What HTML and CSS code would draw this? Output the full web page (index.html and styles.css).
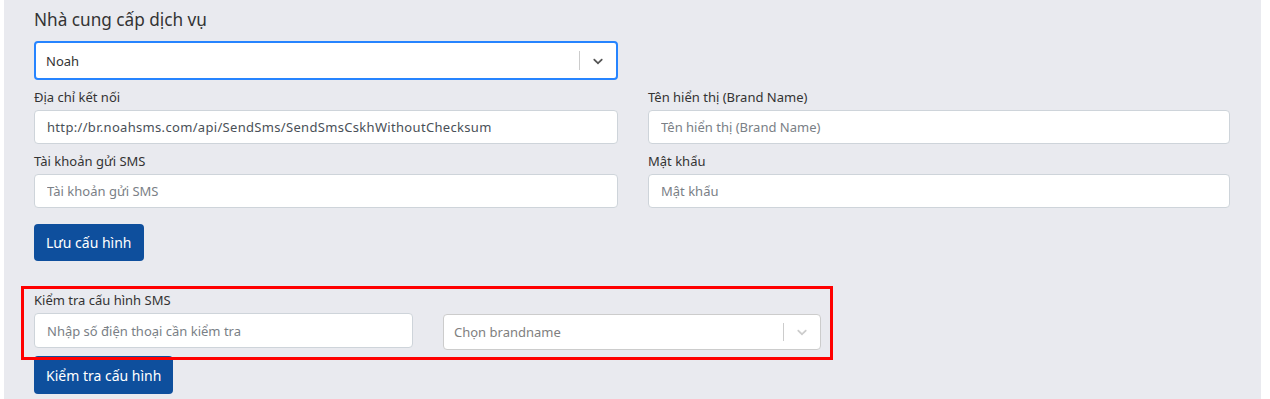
FILE: index.html
```html
<!DOCTYPE html>
<html lang="vi">

<head>
    <meta charset="UTF-8">
    <meta name="viewport" content="width=device-width, initial-scale=1.0">
    <title>Cấu hình SMS</title>
    <link rel="stylesheet" href="styles.css">
</head>

<body>
    <main class="page">
        <h2 class="page-title">Nhà cung cấp dịch vụ</h2>

        <div class="select select-focused provider">
            <span class="select-value">Noah</span>
            <span class="select-sep"></span>
            <span class="select-arrow">
                <svg width="16" height="16" viewBox="0 0 20 20"><path d="M4.516 7.548c0.436-0.446 1.043-0.481 1.576 0l3.908 3.747 3.908-3.747c0.533-0.481 1.141-0.446 1.574 0 0.436 0.445 0.408 1.197 0 1.615-0.406 0.418-4.695 4.502-4.695 4.502-0.217 0.223-0.502 0.335-0.787 0.335s-0.57-0.112-0.789-0.335c0 0-4.287-4.084-4.695-4.502s-0.436-1.17 0-1.615z" /></svg>
            </span>
        </div>

        <div class="form-grid">
            <div class="field">
                <label for="url">Địa chỉ kết nối</label>
                <input type="text" id="url" class="url-input" value="http://br.noahsms.com/api/SendSms/SendSmsCskhWithoutChecksum">
            </div>
            <div class="field">
                <label for="brand">Tên hiển thị (Brand Name)</label>
                <input type="text" id="brand" placeholder="Tên hiển thị (Brand Name)">
            </div>
            <div class="field">
                <label for="account">Tài khoản gửi SMS</label>
                <input type="text" id="account" placeholder="Tài khoản gửi SMS">
            </div>
            <div class="field">
                <label for="password">Mật khẩu</label>
                <input type="text" id="password" placeholder="Mật khẩu">
            </div>
        </div>

        <button class="btn btn-save">Lưu cấu hình</button>

        <section class="test-block">
            <label for="phone">Kiểm tra cấu hình SMS</label>
            <div class="test-row">
                <input type="text" id="phone" placeholder="Nhập số điện thoại cần kiểm tra">
                <div class="select brandname">
                    <span class="select-placeholder">Chọn brandname</span>
                    <span class="select-sep"></span>
                    <span class="select-arrow">
                        <svg width="16" height="16" viewBox="0 0 20 20"><path d="M4.516 7.548c0.436-0.446 1.043-0.481 1.576 0l3.908 3.747 3.908-3.747c0.533-0.481 1.141-0.446 1.574 0 0.436 0.445 0.408 1.197 0 1.615-0.406 0.418-4.695 4.502-4.695 4.502-0.217 0.223-0.502 0.335-0.787 0.335s-0.57-0.112-0.789-0.335c0 0-4.287-4.084-4.695-4.502s-0.436-1.17 0-1.615z" /></svg>
                    </span>
                </div>
            </div>
            <button class="btn btn-test">Kiểm tra cấu hình</button>
        </section>

        <!-- annotation box -->
        <div class="highlight"></div>
    </main>
</body>

</html>
```

FILE: styles.css
```css
* {
    margin: 0;
    padding: 0;
    box-sizing: border-box;
}

body {
    font-family: "Noto Sans", "Open Sans", sans-serif;
    color: #333;
    background: #fff;
    overflow: hidden;
}

.page {
    position: relative;
    margin: 0 9px 0 4px;
    height: 399px;
    padding: 8px 31px 0 30px;
    background: #e9eaef;
}

.page-title {
    font-size: 17.2px;
    font-weight: 400;
    line-height: 24px;
    color: #333;
    margin-bottom: 9px;
}

/* Select (react-select look) */
.select {
    display: flex;
    align-items: center;
    background: #fff;
    border: 1px solid #ccc;
    border-radius: 4px;
    font-size: 13px;
}

.select-focused {
    border: 2px solid #2684ff;
}

.provider {
    width: 584px;
    height: 39px;
    padding-left: 10px;
}

.select-value {
    flex: 1;
    color: #333;
}

.select-placeholder {
    flex: 1;
    color: #808080;
}

.select-sep {
    width: 1px;
    align-self: stretch;
    margin: 8px 0;
    background: #ccc;
}

.select-arrow {
    display: flex;
    padding: 0 10px 0 10px;
    fill: #555;
}

.brandname .select-arrow {
    fill: #ccc;
}

/* Form */
.form-grid {
    display: grid;
    grid-template-columns: 584px 582px;
    column-gap: 30px;
    row-gap: 8px;
    margin-top: 8px;
}

.field label,
.test-block label {
    display: block;
    font-size: 13px;
    line-height: 18px;
    margin-bottom: 4px;
    color: #333;
}

input {
    display: block;
    width: 100%;
    height: 34px;
    padding: 0 12px;
    font-family: inherit;
    font-size: 13px;
    color: #495057;
    background: #fff;
    border: 1px solid #ced4da;
    border-radius: 4px;
}

input::placeholder {
    color: #7a8086;
}

.url-input {
    letter-spacing: 0.32px;
}

.btn {
    display: block;
    height: 37px;
    padding: 0 12px;
    border: none;
    border-radius: 4px;
    background: #0e4f9d;
    color: #fff;
    font-family: inherit;
    font-size: 14px;
}

.btn-save {
    margin-top: 16px;
}

.test-block {
    margin-top: 30px;
}

.test-row {
    display: grid;
    grid-template-columns: 379px 378px;
    column-gap: 30px;
    width: 787px;
}

.test-row input {
    height: 35px;
}

.brandname {
    height: 36px;
    margin-top: 1px;
    padding-left: 10px;
}

.btn-test {
    margin-top: 6px;
    height: 38px;
}

/* Red annotation frame */
.highlight {
    position: absolute;
    left: 17px;
    top: 286px;
    width: 812px;
    height: 74px;
    border: 3px solid #ff0000;
    pointer-events: none;
}
```
